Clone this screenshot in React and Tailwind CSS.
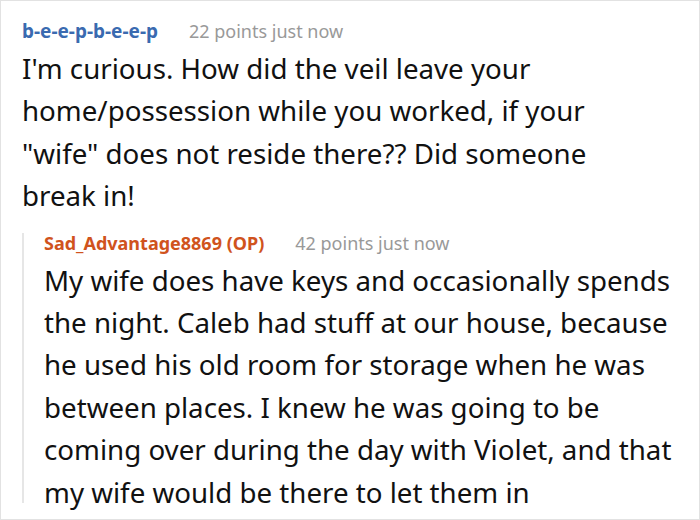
import React from 'react';

const font = { fontFamily: '"Noto Sans", "Open Sans", sans-serif' };

const Comment = ({ user, userClass, meta, text, textClass = '', children }) => (
  <div>
    <div className="flex items-center gap-[31px] h-[20px] whitespace-nowrap">
      <span className={`font-bold leading-none ${userClass}`}>{user}</span>
      <span className="text-[18px] leading-none text-[#999999]">{meta}</span>
    </div>
    <p className={`mt-[6px] text-[27.7px] leading-[42.4px] text-[#111111] ${textClass}`}>{text}</p>
    {children}
  </div>
);

export default function App() {
  return (
    <div className="w-[700px] h-[520px] bg-white border border-[#e2e2e2] overflow-hidden" style={font}>
      <div className="pl-[21px] pr-[16px] pt-[20px]">
        <Comment
          user="b-e-e-p-b-e-e-p"
          userClass="text-[19px] text-[#3a6ab0]"
          meta="22 points just now"
          textClass="max-w-[600px]"
          text={`I'm curious. How did the veil leave your home/possession while you worked, if your "wife" does not reside there?? Did someone break in!`}
        >
          <div className="mt-[16px] flex flex-col border-l-2 border-[#e6e6e6] pl-[20px]">
            <Comment
              user="Sad_Advantage8869 (OP)"
              userClass="text-[18px] text-[#d0531d]"
              meta="42 points just now"
              textClass="-mb-[10px]"
              text="My wife does have keys and occasionally spends the night. Caleb had stuff at our house, because he used his old room for storage when he was between places. I knew he was going to be coming over during the day with Violet, and that my wife would be there to let them in"
            />
          </div>
        </Comment>
      </div>
    </div>
  );
}
